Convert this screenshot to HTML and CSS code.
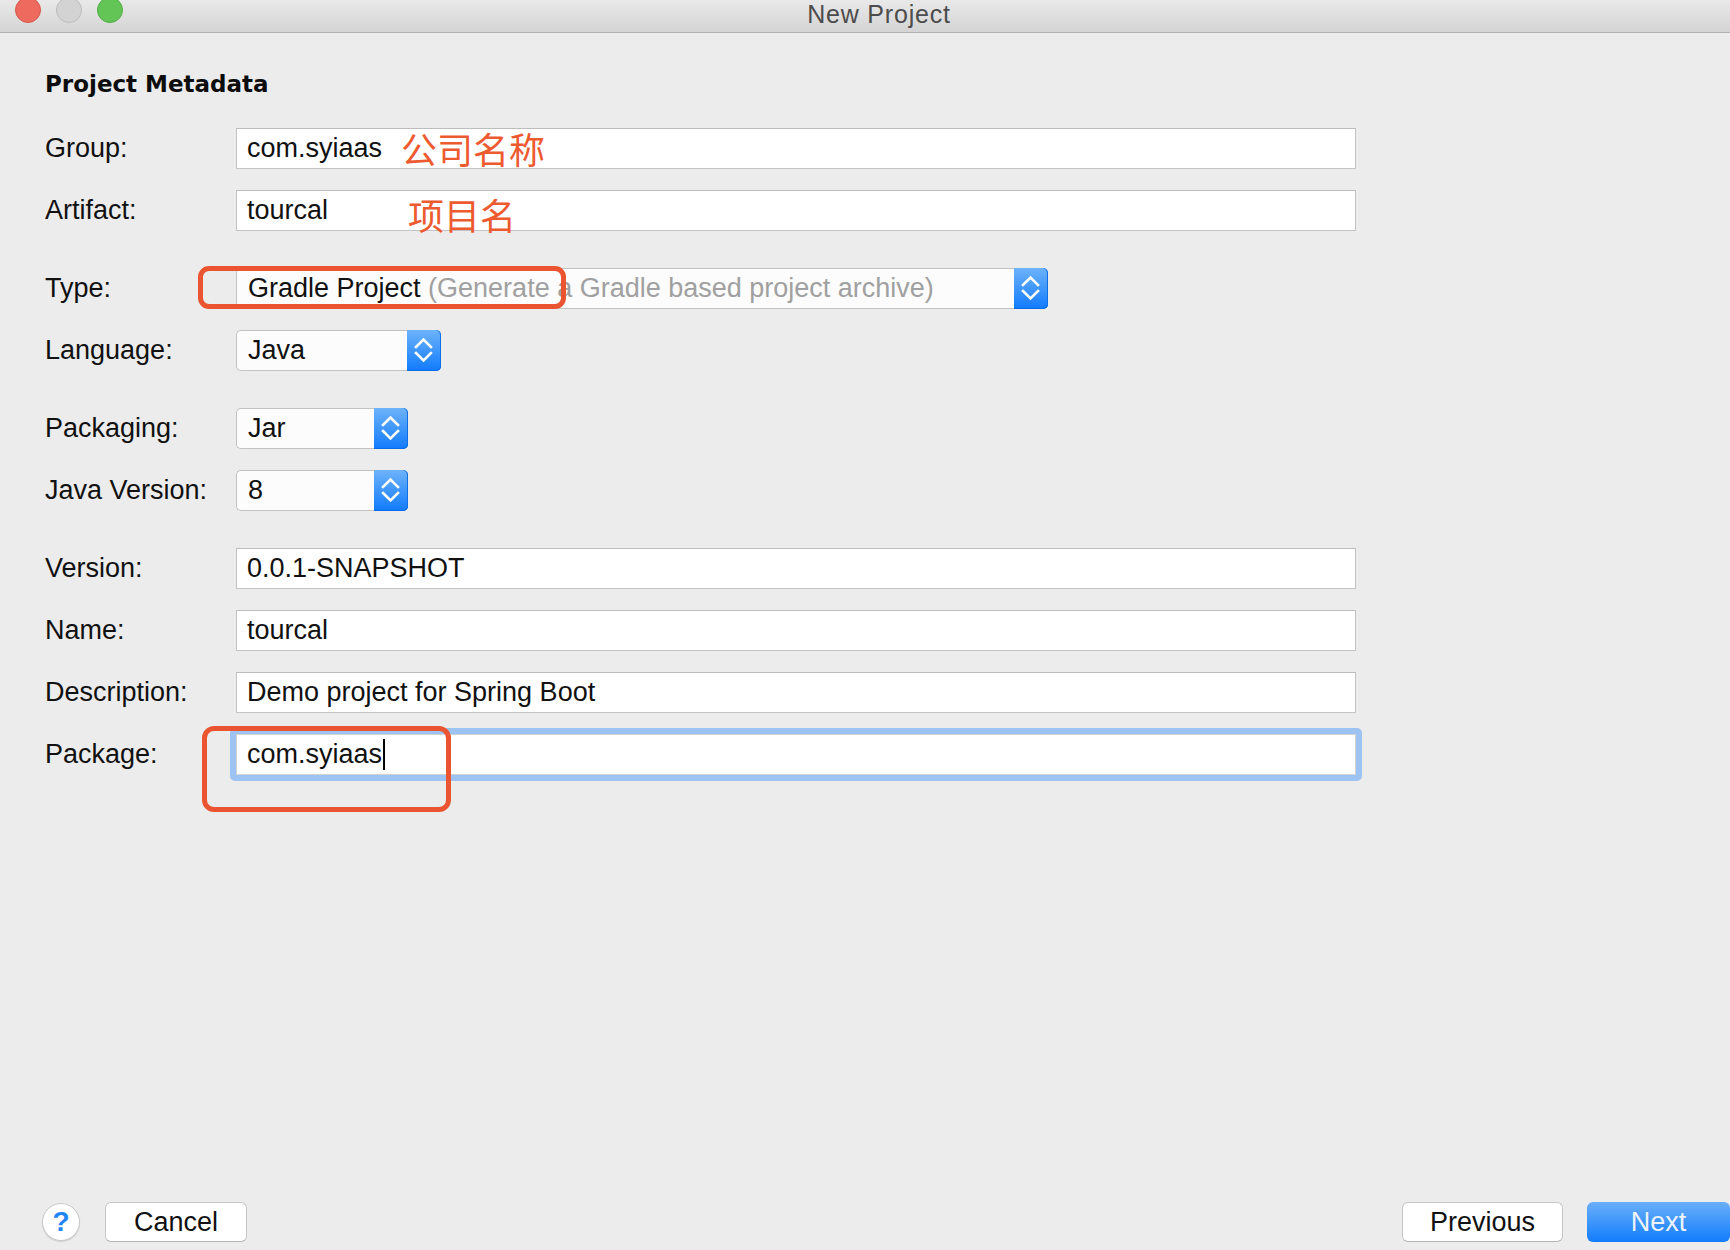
FILE: index.html
```html
<!DOCTYPE html>
<html lang="zh-CN">
<head>
<meta charset="utf-8">
<title>New Project</title>
<link rel="stylesheet" href="styles.css">
</head>
<body>
<div class="window">
  <header class="titlebar">
    <div class="lights">
      <span class="light light-close"></span>
      <span class="light light-min"></span>
      <span class="light light-max"></span>
    </div>
    <div class="title">New Project</div>
  </header>

  <main class="content">
    <h1 class="heading">Project Metadata</h1>

    <div class="form">
      <div class="row">
        <div class="label">Group:</div>
        <div class="field">com.syiaas<span class="note note-group">公司名称</span></div>
      </div>
      <div class="row">
        <div class="label">Artifact:</div>
        <div class="field">tourcal<span class="note note-artifact">项目名</span></div>
      </div>

      <div class="row sep">
        <div class="label">Type:</div>
        <div class="combo combo-type">
          <div class="combo-text">Gradle Project<span class="hint">&nbsp;(Generate a Gradle based project archive)</span></div>
          <div class="combo-btn"><svg viewBox="0 0 34 41" width="34" height="41"><polyline points="9,17 16.5,9.5 24,17"/><polyline points="9,23 16.5,30.5 24,23"/></svg></div>
          <div class="mark mark-type"></div>
        </div>
      </div>
      <div class="row">
        <div class="label">Language:</div>
        <div class="combo combo-lang">
          <div class="combo-text">Java</div>
          <div class="combo-btn"><svg viewBox="0 0 34 41" width="34" height="41"><polyline points="9,17 16.5,9.5 24,17"/><polyline points="9,23 16.5,30.5 24,23"/></svg></div>
        </div>
      </div>

      <div class="row sep">
        <div class="label">Packaging:</div>
        <div class="combo combo-small">
          <div class="combo-text">Jar</div>
          <div class="combo-btn"><svg viewBox="0 0 34 41" width="34" height="41"><polyline points="9,17 16.5,9.5 24,17"/><polyline points="9,23 16.5,30.5 24,23"/></svg></div>
        </div>
      </div>
      <div class="row">
        <div class="label">Java Version:</div>
        <div class="combo combo-small">
          <div class="combo-text">8</div>
          <div class="combo-btn"><svg viewBox="0 0 34 41" width="34" height="41"><polyline points="9,17 16.5,9.5 24,17"/><polyline points="9,23 16.5,30.5 24,23"/></svg></div>
        </div>
      </div>

      <div class="row sep">
        <div class="label">Version:</div>
        <div class="field">0.0.1-SNAPSHOT</div>
      </div>
      <div class="row">
        <div class="label">Name:</div>
        <div class="field">tourcal</div>
      </div>
      <div class="row">
        <div class="label">Description:</div>
        <div class="field">Demo project for Spring Boot</div>
      </div>
      <div class="row">
        <div class="label">Package:</div>
        <div class="field field-focus">com.syiaas<span class="caret"></span>
          <div class="mark mark-package"></div>
        </div>
      </div>
    </div>
  </main>

  <footer class="footer">
    <button class="help">?</button>
    <button class="btn btn-cancel">Cancel</button>
    <div class="spacer"></div>
    <button class="btn btn-prev">Previous</button>
    <button class="btn btn-next">Next</button>
  </footer>
</div>
</body>
</html>
```

FILE: styles.css
```css
html {
  margin: 0;
  padding: 0;
  background: #ececec;
}

body {
  margin: 0;
  padding: 0;
  font-family: "Liberation Sans", Arial, sans-serif;
  color: #151515;
  overflow: hidden;
}

.window {
  width: 1730px;
  height: 1250px;
  display: flex;
  flex-direction: column;
  overflow: hidden;
}

/* Title bar */
.titlebar {
  height: 32px;
  flex: none;
  display: flex;
  align-items: flex-start;
  background: linear-gradient(#e9e9e9, #d4d4d4);
  border-bottom: 1px solid #b2b2b2;
  overflow: hidden;
}

.lights {
  display: flex;
  gap: 15px;
  margin-left: 15px;
  margin-top: -3px;
  flex: none;
}

.light {
  width: 26px;
  height: 26px;
  border-radius: 50%;
  box-sizing: border-box;
}

.light-close { background: #ee6a5e; border: 1px solid #d5584d; }
.light-min   { background: #d3d3d3; border: 1px solid #bcbcbc; }
.light-max   { background: #62c555; border: 1px solid #4fab43; }

.title {
  flex: 1;
  text-align: center;
  padding-right: 95px;
  font-size: 25px;
  line-height: 28px;
  letter-spacing: 0.8px;
  color: #4c4c4c;
}

/* Content */
.content {
  padding: 37px 0 0 45px;
  flex: none;
}

.heading {
  margin: 0 0 30px;
  font-family: "DejaVu Sans", "Liberation Sans", sans-serif;
  font-weight: bold;
  font-size: 23px;
  line-height: 28px;
  color: #0d0d0d;
}

.form {
  display: flex;
  flex-direction: column;
}

.row {
  display: flex;
  align-items: center;
  height: 41px;
}

.row + .row { margin-top: 21px; }
.row.sep { margin-top: 37px; }

.label {
  width: 191px;
  flex: none;
  font-size: 27px;
  color: #111;
}

.field {
  position: relative;
  box-sizing: border-box;
  width: 1120px;
  height: 41px;
  border: 1px solid #c3c3c3;
  border-top-color: #bdbdbd;
  background: #fff;
  padding-left: 10px;
  display: flex;
  align-items: center;
  font-size: 27px;
  color: #111;
  white-space: nowrap;
}

.field-focus {
  border-color: #d2d2d2;
}

.field-focus::before {
  content: "";
  position: absolute;
  left: -7px;
  right: -7px;
  top: -7px;
  bottom: -7px;
  border-radius: 5px;
  background: #9cc3f2;
  z-index: -1;
}

.caret {
  display: inline-block;
  width: 2px;
  height: 31px;
  background: #000;
  margin-left: 1px;
}

.note {
  position: absolute;
  font-family: "Noto Sans CJK SC", sans-serif;
  font-size: 36px;
  line-height: 36px;
  color: #ee5a30;
}

.note-group { left: 164px; top: 1px; }
.note-artifact { left: 171px; top: 5px; }

/* Combo boxes */
.combo {
  position: relative;
  display: flex;
  height: 41px;
  font-size: 27px;
}

.combo-type { width: 812px; }
.combo-lang { width: 205px; }
.combo-small { width: 172px; }

.combo-text {
  flex: 1;
  box-sizing: border-box;
  border: 1px solid #c2c2c2;
  border-right: none;
  border-radius: 5px 0 0 5px;
  background: #fcfcfc;
  padding-left: 11px;
  display: flex;
  align-items: center;
  white-space: nowrap;
  overflow: hidden;
  color: #111;
}

.hint { color: #a0a0a0; }

.combo-btn {
  width: 34px;
  flex: none;
  border-radius: 0 5px 5px 0;
  background: linear-gradient(#6db3fa, #117bfd);
  box-shadow: inset -1px 0 0 #0d6ee8, inset 0 -1px 0 #0b6be4;
}

.combo-btn svg {
  display: block;
  fill: none;
  stroke: #fff;
  stroke-width: 2.6;
  stroke-linecap: square;
}

/* Annotation marks */
.mark {
  position: absolute;
  box-sizing: border-box;
  border: 5px solid #ea5430;
  border-radius: 11px;
}

.mark-type {
  left: -38px;
  top: -2px;
  width: 368px;
  height: 43px;
}

.mark-package {
  left: -35px;
  top: -9px;
  width: 249px;
  height: 86px;
  border-radius: 12px;
}

/* Footer */
.footer {
  margin-top: auto;
  display: flex;
  align-items: center;
  height: 42px;
  padding: 0 0 7px 42px;
  flex: none;
}

.spacer { flex: 1; }

.help {
  width: 38px;
  height: 38px;
  border-radius: 50%;
  border: 1px solid #c9c9c9;
  background: #fff;
  box-shadow: 0 1px 1px rgba(0,0,0,0.12);
  color: #2185f9;
  font-family: "Liberation Sans", Arial, sans-serif;
  font-size: 28px;
  font-weight: bold;
  padding: 0;
  margin-right: 25px;
  line-height: 36px;
}

.btn {
  height: 40px;
  box-sizing: border-box;
  border-radius: 6px;
  border: 1px solid #c6c6c6;
  border-bottom-color: #b5b5b5;
  background: #fff;
  font-family: "Liberation Sans", Arial, sans-serif;
  font-size: 27px;
  color: #111;
  padding: 0;
}

.btn-cancel { width: 142px; }
.btn-prev { width: 161px; margin-right: 24px; }

.btn-next {
  width: 143px;
  border: none;
  background: linear-gradient(#69affa, #127dfc);
  color: #eef3fb;
}
```
